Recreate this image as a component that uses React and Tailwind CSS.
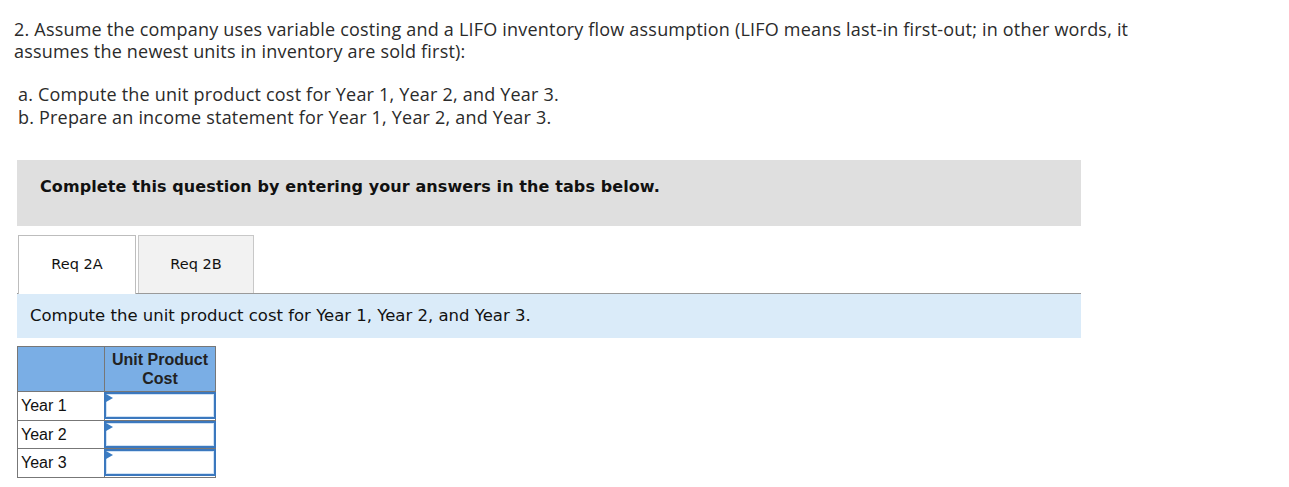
import React from "react";

const years = ["Year 1", "Year 2", "Year 3"];

function Flag() {
  return (
    <svg width="7" height="8" viewBox="0 0 7 8" className="absolute left-0 top-0">
      <polygon points="0,0 7,4 0,8" fill="#3b7dc4" />
    </svg>
  );
}

export default function App() {
  return (
    <div className="w-[1289px] h-[487px] bg-white text-[#2b2b2b] overflow-hidden">
      <div className="pl-[14px] pt-[18px] font-['Open_Sans',sans-serif] text-[18px] tracking-[0.2px] leading-[22px]">
        <p>
          2. Assume the company uses variable costing and a LIFO inventory flow assumption (LIFO means last-in first-out; in other words, it
          <br />
          assumes the newest units in inventory are sold first):
        </p>
        <div className="mt-[21px] pl-[4px] leading-[23px]">
          <p>a. Compute the unit product cost for Year 1, Year 2, and Year 3.</p>
          <p>b. Prepare an income statement for Year 1, Year 2, and Year 3.</p>
        </div>
      </div>

      <div className="ml-[17px] w-[1064px] font-['DejaVu_Sans',sans-serif]">
        <div className="mt-[31px] h-[66px] bg-[#dfdfdf] pl-[23px] pt-[15px]">
          <span className="font-bold text-[16px] tracking-[0.1px] leading-[24px] text-[#111]">Complete this question by entering your answers in the tabs below.</span>
        </div>

        <div className="mt-[9px] flex gap-[2px] pl-[1px] text-[14.5px] text-[#111]">
          <div className="w-[118px] h-[59px] border border-[#bdbdbd] border-b-0 bg-white flex items-center justify-center relative z-10 -mb-px">
            Req 2A
          </div>
          <div className="w-[116px] h-[58px] border border-[#c8c8c8] border-b-0 bg-[#f2f2f2] flex items-center justify-center">
            Req 2B
          </div>
        </div>

        <div className="border-t border-[#9a9a9a] bg-[#daebf9] h-[45px] flex items-center pl-[13px] text-[16.5px] text-[#111]">
          Compute the unit product cost for Year 1, Year 2, and Year 3.
        </div>

        <table className="mt-[8px] border-collapse font-['Liberation_Sans',Arial,sans-serif] text-[16px] text-[#111]">
          <thead>
            <tr className="bg-[#7aaee5]">
              <th className="w-[87px] h-[45px] border border-[#777]"></th>
              <th className="w-[111px] h-[45px] border border-[#777] font-bold leading-[19px] text-center text-[#222]">
                Unit Product
                <br />
                Cost
              </th>
            </tr>
          </thead>
          <tbody>
            {years.map((y) => (
              <tr key={y}>
                <td className="h-[28.5px] border border-[#777] pl-[3px] pt-[1px] leading-[20px]">{y}</td>
                <td className="h-[28.5px] border border-[#777] p-0 bg-white">
                  <div className="relative h-[27px] border-2 border-[#3b78be] mx-[-1px] bg-white">
                    <div className="absolute inset-0 border border-[#d0e2f5]"></div>
                    <Flag />
                  </div>
                </td>
              </tr>
            ))}
          </tbody>
        </table>
      </div>
    </div>
  );
}
